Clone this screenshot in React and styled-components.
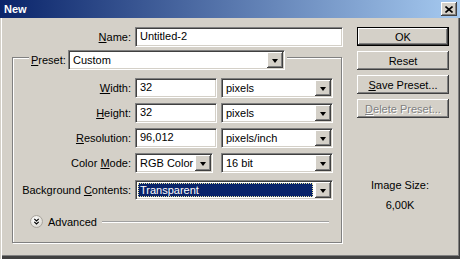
import styled, { createGlobalStyle } from 'styled-components';

const GlobalStyle = createGlobalStyle`
  html, body {
    margin: 0;
    padding: 0;
    background: #d4d0c8;
  }
  body {
    font-family: 'Liberation Sans', Arial, sans-serif;
    font-size: 11px;
    color: #000;
  }
  * {
    box-sizing: border-box;
  }
`;

const raised = `
  background: #d4d0c8;
  box-shadow: inset -1px -1px 0 #404040, inset 1px 1px 0 #ffffff,
    inset -2px -2px 0 #808080, inset 2px 2px 0 #d4d0c8;
`;

const sunken = `
  background: #ffffff;
  border: 1px solid;
  border-color: #808080 #ffffff #ffffff #808080;
  box-shadow: inset 1px 1px 0 #404040, inset -1px -1px 0 #d4d0c8;
`;

const Window = styled.div`
  width: 460px;
  height: 259px;
  display: flex;
  flex-direction: column;
  background: #d4d0c8;
  box-shadow: inset 1px 0 0 #d4d0c8, inset 2px 0 0 #ffffff,
    inset -1px -3px 0 #404040, inset -2px -4px 0 #808080;
`;

const TitleBar = styled.div`
  height: 18px;
  flex-shrink: 0;
  display: flex;
  align-items: center;
  justify-content: space-between;
  padding: 0 3px 0 4px;
  background: linear-gradient(to right, #0a246a, #a6caf0);
`;

const Title = styled.span`
  color: #fff;
  font-weight: bold;
  font-size: 11px;
`;

const CloseButton = styled.div`
  width: 16px;
  height: 14px;
  display: flex;
  align-items: center;
  justify-content: center;
  ${raised}
`;

const Body = styled.div`
  flex: 1;
  display: flex;
  gap: 14px;
  padding: 9px 0 0 12px;
`;

const LeftColumn = styled.div`
  width: 331px;
  display: flex;
  flex-direction: column;
`;

const NameRow = styled.div`
  display: grid;
  grid-template-columns: 119px 208px;
  column-gap: 4px;
  align-items: center;
`;

const Label = styled.span`
  height: 20px;
  line-height: 20px;
  text-align: right;
  white-space: nowrap;
`;

const Key = styled.span`
  text-decoration: underline;
  text-underline-offset: 1px;
`;

const TextBox = styled.div`
  ${sunken}
  height: 20px;
  padding: 0 4px;
  line-height: 17px;
  white-space: nowrap;
  width: ${(p) => (p.$width ? `${p.$width}px` : 'auto')};
`;

const Select = styled.div`
  ${sunken}
  height: 20px;
  display: flex;
  align-items: stretch;
  padding: 1px;
  width: ${(p) => (p.$width ? `${p.$width}px` : 'auto')};
  grid-column: ${(p) => p.$span || 'auto'};
`;

const SelectValue = styled.div`
  flex: 1;
  padding: 0 3px;
  line-height: 16px;
  white-space: nowrap;
  overflow: hidden;
  margin-right: 1px;
  ${(p) =>
    p.$selected &&
    `
    background: #0a246a;
    color: #fff;
    outline: 1px dotted #e8e4a0;
    outline-offset: -1px;
    margin: 1px 2px 1px 1px;
    line-height: 14px;
    padding-left: 2px;
  `}
`;

const DropButton = styled.div`
  width: 16px;
  flex-shrink: 0;
  display: flex;
  align-items: center;
  justify-content: center;
  ${raised}
  &::after {
    content: '';
    width: 0;
    height: 0;
    border-left: 3px solid transparent;
    border-right: 3px solid transparent;
    border-top: 4px solid #000;
    margin-top: 1px;
  }
`;

const Group = styled.div`
  margin-top: 10px;
  width: 330px;
  border: 1px solid #808080;
  box-shadow: inset 1px 1px 0 #ffffff, 1px 1px 0 #ffffff;
  padding-bottom: 14px;
`;

const GroupHeader = styled.div`
  display: flex;
  align-items: center;
  width: fit-content;
  margin: -8px 0 0 16px;
  padding: 0 2px;
  background: #d4d0c8;
`;

const HeaderLabel = styled.span`
  width: 37px;
  white-space: nowrap;
`;

const Fields = styled.div`
  margin-top: 8px;
  display: grid;
  grid-template-columns: 118px 82px 112px;
  grid-template-rows: repeat(4, 20px) 22px;
  column-gap: 4px;
  row-gap: 5px;
  align-items: end;
`;

const AdvancedRow = styled.div`
  display: flex;
  align-items: center;
  height: 13px;
  margin: 15px 12px 0 17px;
`;

const AdvancedText = styled.span`
  margin-left: 5px;
`;

const Rule = styled.div`
  flex: 1;
  height: 2px;
  margin-left: 5px;
  border-top: 1px solid #a0a0a0;
  border-bottom: 1px solid #ffffff;
`;

const RightColumn = styled.div`
  width: 92px;
  display: flex;
  flex-direction: column;
  gap: 5px;
`;

const Button = styled.button`
  height: 19px;
  padding: 0;
  border: none;
  font-family: inherit;
  font-size: 11px;
  color: ${(p) => (p.disabled ? '#808080' : '#000')};
  text-shadow: ${(p) => (p.disabled ? '1px 1px 0 #ffffff' : 'none')};
  ${raised}
  ${(p) =>
    p.$default &&
    `
    outline: 1px solid #000;
    outline-offset: -1px;
    box-shadow: inset -2px -2px 0 #404040, inset 2px 2px 0 #ffffff,
      inset -3px -3px 0 #808080;
  `}
`;

const SizeInfo = styled.div`
  margin-top: 55px;
  padding-right: 6px;
  display: flex;
  flex-direction: column;
  align-items: center;
  gap: 6px;
  line-height: 14px;
`;

const AdvancedIcon = () => (
  <svg width="13" height="13" viewBox="0 0 13 13">
    <defs>
      <radialGradient id="adv" cx="0.4" cy="0.35" r="0.7">
        <stop offset="0" stopColor="#ffffff" />
        <stop offset="1" stopColor="#d8d5ce" />
      </radialGradient>
    </defs>
    <circle cx="6.5" cy="6.5" r="6" fill="url(#adv)" stroke="#a8a49c" />
    <path
      d="M4.3 3.8 L6.5 6 L8.7 3.8 M4.3 6.8 L6.5 9 L8.7 6.8"
      fill="none"
      stroke="#000"
      strokeWidth="1.1"
    />
  </svg>
);

const CloseIcon = () => (
  <svg width="8" height="7" viewBox="0 0 8 7">
    <path d="M0.5 0.5 L7.5 6.5 M7.5 0.5 L0.5 6.5" stroke="#000" strokeWidth="1.6" />
  </svg>
);

const Dropdown = ({ value, width, span, selected }) => (
  <Select $width={width} $span={span}>
    <SelectValue $selected={selected}>{value}</SelectValue>
    <DropButton />
  </Select>
);

const App = () => (
  <>
    <GlobalStyle />
    <Window>
      <TitleBar>
        <Title>New</Title>
        <CloseButton>
          <CloseIcon />
        </CloseButton>
      </TitleBar>
      <Body>
        <LeftColumn>
          <NameRow>
            <Label>
              <Key>N</Key>ame:
            </Label>
            <TextBox>Untitled-2</TextBox>
          </NameRow>
          <Group>
            <GroupHeader>
              <HeaderLabel>
                <Key>P</Key>reset:
              </HeaderLabel>
              <Dropdown value="Custom" width={217} />
            </GroupHeader>
            <Fields>
              <Label>
                <Key>W</Key>idth:
              </Label>
              <TextBox>32</TextBox>
              <Dropdown value="pixels" />

              <Label>
                <Key>H</Key>eight:
              </Label>
              <TextBox>32</TextBox>
              <Dropdown value="pixels" />

              <Label>
                <Key>R</Key>esolution:
              </Label>
              <TextBox>96,012</TextBox>
              <Dropdown value="pixels/inch" />

              <Label>
                Color <Key>M</Key>ode:
              </Label>
              <Dropdown value="RGB Color" width={78} />
              <Dropdown value="16 bit" />

              <Label>
                Background <Key>C</Key>ontents:
              </Label>
              <Dropdown value="Transparent" span="2 / span 2" selected />
            </Fields>
            <AdvancedRow>
              <AdvancedIcon />
              <AdvancedText>Advanced</AdvancedText>
              <Rule />
            </AdvancedRow>
          </Group>
        </LeftColumn>
        <RightColumn>
          <Button $default>OK</Button>
          <Button>Reset</Button>
          <Button>
            <Key>S</Key>ave Preset...
          </Button>
          <Button disabled>
            <Key>D</Key>elete Preset...
          </Button>
          <SizeInfo>
            <span>Image Size:</span>
            <span>6,00K</span>
          </SizeInfo>
        </RightColumn>
      </Body>
    </Window>
  </>
);

export default App;
